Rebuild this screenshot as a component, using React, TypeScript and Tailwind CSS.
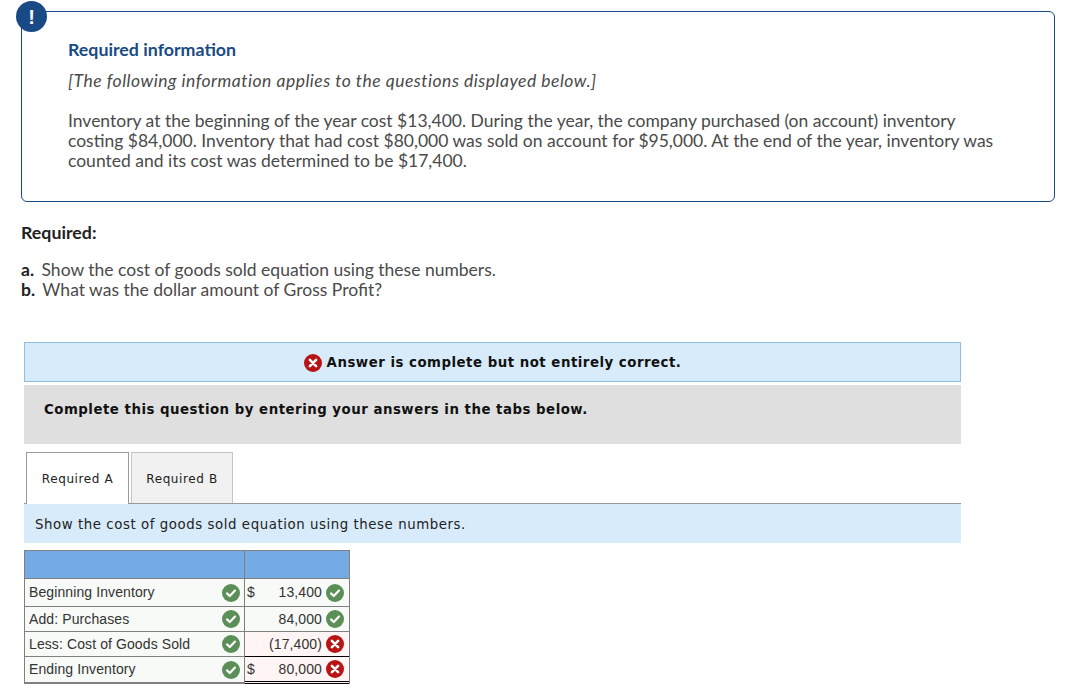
const MAIN_FONT = 'font-["Lato","Open_Sans",sans-serif]';

function Check() {
  return (
    <svg viewBox="0 0 18 18" className="w-[18px] h-[18px] shrink-0">
      <circle cx="9" cy="9" r="9" fill="#5b8f57" />
      <path d="M5 9.4l2.8 2.6L13 6.6" fill="none" stroke="#fff" strokeWidth="2.2" strokeLinecap="round" strokeLinejoin="round" />
    </svg>
  );
}

function Cross() {
  return (
    <svg viewBox="0 0 18 18" className="w-[18px] h-[18px] shrink-0">
      <circle cx="9" cy="9" r="9" fill="#b81414" />
      <path d="M5.9 5.9l6.2 6.2M12.1 5.9l-6.2 6.2" fill="none" stroke="#fff" strokeWidth="2.6" strokeLinecap="round" />
    </svg>
  );
}

const ROWS = [
  { label: 'Beginning Inventory', dollar: true, value: '13,400', ok: true, h: 'h-[28px]' },
  { label: 'Add: Purchases', dollar: false, value: '84,000', ok: true, h: 'h-[25px]' },
  { label: 'Less: Cost of Goods Sold', dollar: false, value: '(17,400)', ok: false, h: 'h-[25px]' },
  { label: 'Ending Inventory', dollar: true, value: '80,000', ok: false, h: 'h-[25px]' },
];

export default function App() {
  return (
    <div className={`w-[1071px] h-[692px] overflow-hidden bg-white pt-[11px] pl-[21px] text-[#4a4a4a] ${MAIN_FONT}`}>
      {/* Required information box */}
      <div className="relative w-[1034px] h-[191px] border border-[#1a4a85] rounded-[6px] pl-[46px] pr-[40px] pt-[25px]">
        <div className="absolute left-[-6px] top-[-11px] w-[31px] h-[31px] rounded-full bg-[#1a4a85] flex items-center justify-center text-white text-[20px] font-['Liberation_Sans',sans-serif] font-bold leading-none">
          !
        </div>
        <div className="text-[17.8px] leading-[24px] font-bold text-[#1a4a85]">Required information</div>
        <div className="mt-[8px] text-[17.5px] tracking-[0.5px] leading-[24px] italic">[The following information applies to the questions displayed below.]</div>
        <p className="mt-[18px] text-[17.5px] leading-[20px] w-[945px]">
          Inventory at the beginning of the year cost $13,400. During the year, the company purchased (on account) inventory costing $84,000. Inventory that had cost $80,000 was sold on account for $95,000. At the end of the year, inventory was counted and its cost was determined to be $17,400.
        </p>
      </div>

      <div className="mt-[18px] text-[17.8px] leading-[24px] font-bold text-[#222]">Required:</div>
      <div className="mt-[16px] text-[17.5px] leading-[20px]">
        <div><b className="text-[#222] pr-[3px]">a.</b> Show the cost of goods sold equation using these numbers.</div>
        <div><b className="text-[#222] pr-[3px]">b.</b> What was the dollar amount of Gross Profit?</div>
      </div>

      {/* Answer area */}
      <div className="ml-[3px] mt-[42px] w-[937px] font-['DejaVu_Sans',sans-serif] text-[#222]">
        <div className="h-[40px] pt-[2px] bg-[#d8ebfa] border border-[#93bce2] flex items-center justify-center gap-[5px] text-[13.33px] tracking-[0.5px] font-bold text-[#111]">
          <Cross />
          <span>Answer is complete but not entirely correct.</span>
        </div>
        <div className="mt-[3px] h-[59px] bg-[#dfdfdf] pl-[20px] pt-[15px] text-[13.33px] tracking-[0.5px] leading-[20px] font-bold text-[#111]">
          Complete this question by entering your answers in the tabs below.
        </div>

        <div className="mt-[8px] h-[52px] flex items-end gap-[2px] pl-[2px] border-b border-[#999]">
          <div className="w-[103px] h-[52px] -mb-px bg-white border border-b-0 border-[#999] flex items-center justify-center text-[12px] tracking-[0.6px]">
            Required A
          </div>
          <div className="w-[102px] h-[51px] pt-[2px] bg-[#f1f1f1] border border-b-0 border-[#c4c4c4] flex items-center justify-center text-[12px] tracking-[0.6px]">
            Required B
          </div>
        </div>
        <div className="h-[39px] pt-[2px] bg-[#d8ebfa] pl-[11px] flex items-center text-[13.33px] tracking-[0.56px]">
          Show the cost of goods sold equation using these numbers.
        </div>

        {/* Table */}
        <div className="mt-[7px] w-[326px] border border-[#808080] border-b-2 font-['Liberation_Sans',sans-serif] text-[14px] tracking-[0.1px] text-[#333] bg-[#f7faf7]">
          <div className="h-[28px] flex bg-[#75abe5] border-b border-[#808080]">
            <div className="w-[220px] border-r border-[#808080]" />
          </div>
          {ROWS.map((r, i) => (
            <div key={r.label} className={`flex ${r.h} ${i < ROWS.length - 1 ? 'border-b border-[#808080]' : ''}`}>
              <div className="w-[220px] border-r border-[#808080] flex items-center pl-[4px] pr-[4px] justify-between">
                <span>{r.label}</span>
                <Check />
              </div>
              <div className={`flex-1 flex items-center pl-[2px] pr-[5px] ${r.ok ? '' : 'bg-[#fff5f4]'} ${i === 2 ? 'border-b border-black -mb-px' : ''} ${i === 3 ? 'border-b-[3px] border-double border-black -mb-[2px]' : ''}`}>
                <span className="w-[10px]">{r.dollar ? '$' : ''}</span>
                <span className="flex-1 text-right pr-[4px]">{r.value}</span>
                {r.ok ? <Check /> : <Cross />}
              </div>
            </div>
          ))}
        </div>
      </div>
    </div>
  );
}
